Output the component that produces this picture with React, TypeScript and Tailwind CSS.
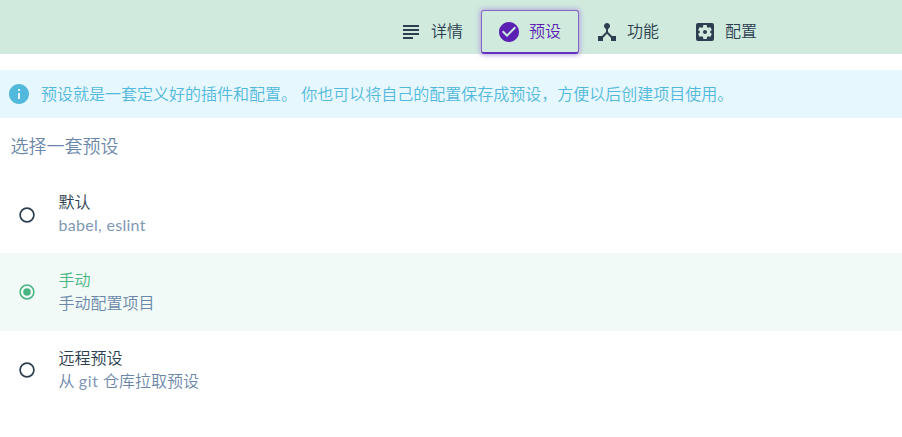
import type { ReactNode } from 'react';
import { MdSubject, MdCheckCircle, MdDeviceHub, MdSettingsApplications, MdInfo } from 'react-icons/md';

function Tab({ icon, label, active = false }: { icon: ReactNode; label: string; active?: boolean }) {
  return (
    <div className={`flex h-[44px] w-[98px] items-center gap-2 rounded-[3px] border pl-[15px] text-[16px] ${active ? 'border-[#8565c4] border-b-2 border-b-[#6333bd] text-[#5c1fb3] shadow-[0_0_5px_1px_#b3a2dc]' : 'border-transparent border-b-2 text-[#2c3e50]'}`}>
      {icon}
      <span className="mb-px">{label}</span>
    </div>
  );
}

function Radio({ checked }: { checked: boolean }) {
  return (
    <svg className="shrink-0" width="18" height="18" viewBox="0 0 18 18" fill="none" stroke="currentColor">
      <circle cx="9" cy="9" r="6.9" strokeWidth={checked ? 1.5 : 1.7} />
      {checked && <circle cx="9" cy="9" r="3.8" fill="currentColor" stroke="none" />}
    </svg>
  );
}

function Preset({ name, info, checked = false }: { name: string; info: ReactNode; checked?: boolean }) {
  return (
    <div className={`flex h-[78px] items-center pl-[18px] first:h-[77px] ${checked ? 'bg-[#f1faf6] text-[#4ab583]' : 'text-[#2c3e50]'}`}>
      <Radio checked={checked} />
      <div className="mb-[3px] ml-[22.5px] text-[16px] leading-[23px]">
        <div>{name}</div>
        <div className="text-[#6b88aa]">{info}</div>
      </div>
    </div>
  );
}

export default function App() {
  return (
    <div className="h-[437px] w-[902px] overflow-hidden bg-white font-[Lato,'Noto_Sans_CJK_SC',sans-serif] [font-weight:350]">
      <div className="flex h-[54px] bg-[#d0eade] pt-[10px] pl-[383px]">
        <Tab icon={<MdSubject size={24} />} label="详情" />
        <Tab icon={<MdCheckCircle size={24} />} label="预设" active />
        <Tab icon={<MdDeviceHub size={24} />} label="功能" />
        <Tab icon={<MdSettingsApplications size={24} />} label="配置" />
      </div>
      <div className="mt-4 flex h-12 items-center bg-[#e6f7fe] pl-[7px] text-[16px] text-[#53b9dc]">
        <MdInfo size={24} />
        <span className="ml-[10px] whitespace-pre">预设就是一套定义好的插件和配置。 你也可以将自己的配置保存成预设，方便以后创建项目使用。</span>
      </div>
      <div className="h-[58px] pt-[15px] pl-[10.5px] text-[18px] leading-[27px] text-[#6b88aa]">选择一套预设</div>
      <div>
        <Preset name="默认" info={<span className="font-normal tracking-[0.3px] text-[#7f98b5]">babel, eslint</span>} />
        <Preset name="手动" info="手动配置项目" checked />
        <Preset name="远程预设" info={<>从 <span className="font-normal tracking-[0.6px] text-[#7f98b5]">git</span> 仓库拉取预设</>} />
      </div>
    </div>
  );
}
